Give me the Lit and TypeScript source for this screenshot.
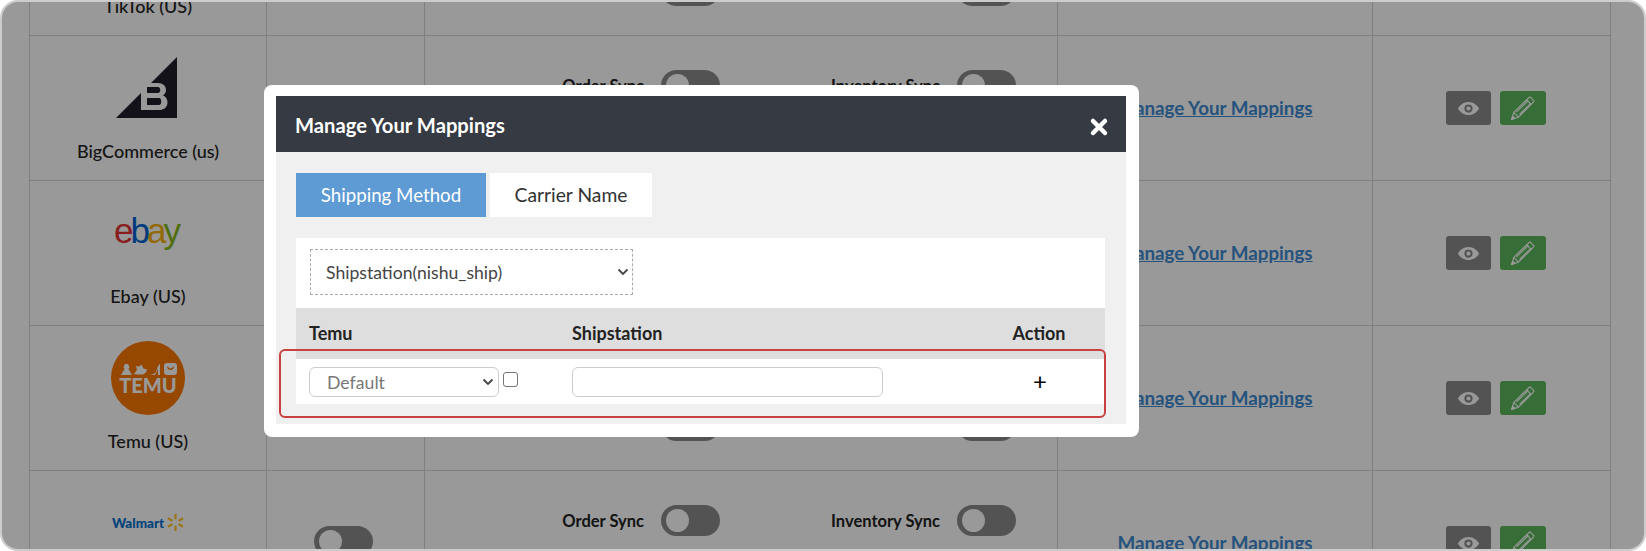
import { LitElement, html, css } from "lit";
import { customElement } from "lit/decorators.js";

const eye = html`<svg viewBox="0 0 24 16" width="23" height="15"><path fill="#fff" fill-rule="evenodd" d="M12 1C7 1 3 4 .6 8 3 12 7 15 12 15s9-3 11.400-7C21 4 17 1 12 1Zm0 2.600a4.400 4.400 0 1 1 0 8.800 4.400 4.400 0 0 1 0-8.800Zm0 2.200a2.200 2.200 0 1 0 0 4.400 2.200 2.200 0 0 0 0-4.400Z"/></svg>`;
const pencil = html`<svg viewBox="0 0 24 24" width="26" height="26" fill="none" stroke="#fff" stroke-width="1.050" stroke-linejoin="round"><path d="M1.500 22.500 3.500 16 17 2.800l1.500-1 3.700 3.700-1 1.500L7.800 20.500Z"/><path d="M3.500 16l4.300 4.500M15.300 4.500l4.200 4.200M6 15.500 17 5M8.800 18 19.500 7.500"/><path fill="#fff" d="M1.500 22.500 2.500 19.500 4.500 21.500Z"/></svg>`;

@customElement("app-root")
export class AppRoot extends LitElement {
  static styles = css`
    :host { display: block; width: 1646px; height: 551px; background: #fff; font-family: Lato, "Open Sans", sans-serif; }
    .frame { position: relative; box-sizing: border-box; height: 551px; border: 2px solid #ccc; border-radius: 18px; overflow: hidden; background: #fff; padding: 0 34px 0 27px; }
    .table { margin-top: -112px; border-top: 1px solid #d6d6d6; border-left: 1px solid #d6d6d6; }
    .row { display: grid; grid-template-columns: 237px 158px 633px 315px 238px; height: 145px; box-sizing: border-box; }
    .cell { border-right: 1px solid #d6d6d6; border-bottom: 1px solid #d6d6d6; box-sizing: border-box; min-width: 0; }
    .brand { display: flex; flex-direction: column; align-items: center; justify-content: center; gap: 7px; color: #222; font-size: 18px; font-weight: 500; padding-bottom: 12px; }
    .logo { height: 90px; display: flex; align-items: center; justify-content: center; }
    .name { height: 22px; line-height: 22px; }
    .bigc { margin-right: 4px; }
    .ebay { font: 400 35px "Liberation Sans", sans-serif; letter-spacing: -3px; margin: 0 4px 3px 0; }
    .ebay .e { color: #e53238; }
    .ebay .b { color: #0064d2; }
    .ebay .a { color: #f5af02; }
    .ebay .y { color: #86b817; }
    .walmart { display: inline-flex; align-items: center; gap: 3px; color: #0071ce; font-size: 13.500px; font-weight: 900; }
    .center { display: flex; align-items: center; justify-content: center; }
    .ctoggle { padding: 0 4px 4px 0; }
    .linkcell { padding-bottom: 2px; }
    .sync { display: grid; grid-template-columns: 295px 296px; align-content: start; padding-top: 34px; row-gap: 19px; }
    .pair { display: flex; align-items: center; justify-content: flex-end; gap: 17px; font-size: 16.500px; font-weight: 700; color: #222; height: 31px; }
    .toggle { width: 59px; height: 31px; border-radius: 16px; background: #8a8a8a; position: relative; flex: none; }
    .toggle::after { content: ""; position: absolute; left: 5px; top: 4px; width: 23px; height: 23px; border-radius: 50%; background: #fff; }
    .link { font-size: 18.800px; font-weight: 700; color: #3e8ad0; text-decoration: underline; }
    .acts { display: flex; align-items: center; justify-content: center; gap: 9px; padding-left: 9px; }
    .btn { width: 45px; height: 34px; border-radius: 3px; display: flex; align-items: center; justify-content: center; background: #8a8a8a; }
    .btn.green { width: 46px; background: #5cb85c; }
    .overlay { position: absolute; inset: 0; background: rgba(0,0,0,.4); }
    .dialog { position: absolute; left: 262px; top: 83px; width: 875px; height: 352px; box-sizing: border-box; background: #fff; border-radius: 8px; padding: 11px 13px 13px 12px; }
    .head { height: 56px; background: #363a42; color: #fff; display: flex; align-items: center; justify-content: space-between; padding: 2px 17px 0 19px; box-sizing: border-box; font-size: 20.200px; font-weight: 700; }
    .x { width: 20px; height: 20px; display: block; margin-top: 4px; }
    .body { background: #f0f0f0; height: 272px; padding: 21px 21px 0 20px; box-sizing: border-box; position: relative; }
    .tabs { display: flex; gap: 4px; height: 44px; font-size: 19.300px; }
    .tab { background: #fff; color: #333; display: flex; align-items: center; justify-content: center; width: 162px; padding-bottom: 1px; box-sizing: border-box; }
    .tab.on { background: #5e9bd4; color: #fff; width: 190px; font-size: 18.700px; padding-bottom: 0; }
    .panel { margin-top: 21px; background: #fff; }
    .pick { padding: 11px 14px 13px; height: 70px; box-sizing: border-box; }
    .pickbox { width: 323px; height: 46px; box-sizing: border-box; border: 1px dashed #aaa; display: flex; align-items: center; justify-content: space-between; padding: 0 3px 0 15px; font-size: 17.600px; color: #444; }
    .cols { display: grid; grid-template-columns: 263px 1fr 108px; }
    .thead { background: #dedede; height: 51px; align-items: center; font-size: 18px; font-weight: 700; color: #222; padding: 0 0 2px 13px; box-sizing: border-box; }
    .thead .act { text-align: center; padding-right: 24px; }
    .tr { height: 45px; padding: 8px 0 0 13px; box-sizing: border-box; }
    .dflt { display: flex; align-items: flex-start; gap: 4px; }
    .sel { width: 190px; height: 30px; box-sizing: border-box; border: 1px solid #ccc; border-radius: 6px; display: flex; align-items: center; justify-content: space-between; padding: 0 4px 0 17px; color: #777; font-size: 17.700px; }
    .cb { width: 15px; height: 15px; box-sizing: border-box; border: 1.500px solid #767676; border-radius: 3px; margin-top: 5px; background: #fff; }
    .inp { width: 311px; height: 30px; box-sizing: border-box; border: 1px solid #ccc; border-radius: 6px; background: #fff; }
    .plus { display: flex; justify-content: center; padding-right: 22px; color: #000; font-size: 24px; line-height: 27px; font-weight: 400; }
    .red { position: absolute; left: 3px; right: 20px; top: 197px; height: 69px; box-sizing: border-box; border: 2px solid #c94040; border-radius: 6px; }
    .ch { width: 12px; height: 8px; display: block; flex: none; }
  `;

  private chev() {
    return html`<svg class="ch" viewBox="0 0 12 8"><path d="M1.500 1.500 6 6l4.500-4.500" fill="none" stroke="#444" stroke-width="1.800"/></svg>`;
  }

  private logo(kind: string) {
    if (kind === "big") return html`<svg class="bigc" width="61" height="61" viewBox="0 0 61 61"><path fill="#1e1e28" d="M0 61 61 0v61Z"/><path fill="#fff" fill-rule="evenodd" d="M25 26h17c5 0 8 3 8 7 0 2-1 4-3 5.500 3 1 4.500 4 4.500 7 0 5-4 7.500-8.500 7.500H25Zm6 4v6h11c3 0 3-6 0-6Zm0 11v7h12c3 0 3-7 0-7Z"/></svg>`;
    if (kind === "ebay") return html`<span class="ebay"><span class="e">e</span><span class="b">b</span><span class="a">a</span><span class="y">y</span></span>`;
    if (kind === "temu") return html`<svg width="74" height="74" viewBox="0 0 74 74"><circle cx="37" cy="37" r="37" fill="#fb7701"/><g fill="#fff"><path d="M10 34l3.500-6-1-2 1.500-3h3l1.500 3-1 2 3.500 6Z"/><path d="M23 33l3-4-1-4 3 .5 2.500-2 2 4 3.500 1-1 3-3 2h-7Z"/><path d="M38 34c3 0 5-1 7-3 1-3 2-7 4-8v11h-2v-6l-3 6Z"/><path fill-rule="evenodd" d="M56 22h7a3 3 0 0 1 3 3v6a3 3 0 0 1-3 3h-7a3 3 0 0 1-3-3v-6a3 3 0 0 1 3-3Zm0 4c1 4 6 4 7 0l-1-.5c-1 2.500-4 2.500-5 0Z"/><text x="37" y="52" font-family="Lato" font-weight="900" font-size="20" text-anchor="middle">TEMU</text></g></svg>`;
    if (kind === "walmart") return html`<span class="walmart">Walmart<svg width="17" height="17" viewBox="0 0 16 16" stroke="#ffc220" stroke-width="2"><path d="M8 0v5M8 11v5M1 4l4 2.500M11 9.500l4 2.500M1 12l4-2.500M11 6.500 15 4"/></svg></span>`;
    return html``;
  }

  private row(kind: string, name: string, visible = true) {
    return html`<div class="row">
      <div class="cell brand"><div class="logo">${this.logo(kind)}</div><div class="name">${name}</div></div>
      <div class="cell center ctoggle"><div class="toggle"></div></div>
      <div class="cell sync">
        <div class="pair">${visible ? "Order Sync" : ""} <div class="toggle"></div></div>
        <div class="pair">${visible ? "Inventory Sync" : ""} <div class="toggle"></div></div>
        <div class="pair"><div class="toggle"></div></div>
        <div class="pair"><div class="toggle"></div></div>
      </div>
      <div class="cell center linkcell">${visible ? html`<span class="link">Manage Your Mappings</span>` : ""}</div>
      <div class="cell acts"><div class="btn">${eye}</div><div class="btn green">${pencil}</div></div>
    </div>`;
  }

  render() {
    return html`<div class="frame">
      <div class="table">
        ${this.row("", "TikTok (US)", false)}
        ${this.row("big", "BigCommerce (us)")}
        ${this.row("ebay", "Ebay (US)")}
        ${this.row("temu", "Temu (US)")}
        ${this.row("walmart", "")}
      </div>
      <div class="overlay"></div>
      <div class="dialog">
        <div class="head"><span>Manage Your Mappings</span>
          <svg class="x" viewBox="0 0 20 20"><path d="M4 4l12 12M16 4 4 16" stroke="#fff" stroke-width="4.500" stroke-linecap="round"/></svg></div>
        <div class="body">
          <div class="tabs"><div class="tab on">Shipping Method</div><div class="tab">Carrier Name</div></div>
          <div class="panel">
            <div class="pick"><div class="pickbox"><span>Shipstation(nishu_ship)</span>${this.chev()}</div></div>
            <div class="cols thead"><div>Temu</div><div>Shipstation</div><div class="act">Action</div></div>
            <div class="cols tr">
              <div class="dflt"><div class="sel"><span>Default</span>${this.chev()}</div><div class="cb"></div></div>
              <div><div class="inp"></div></div>
              <div class="plus">+</div>
            </div>
          </div>
          <div class="red"></div>
        </div>
      </div>
    </div>`;
  }
}
